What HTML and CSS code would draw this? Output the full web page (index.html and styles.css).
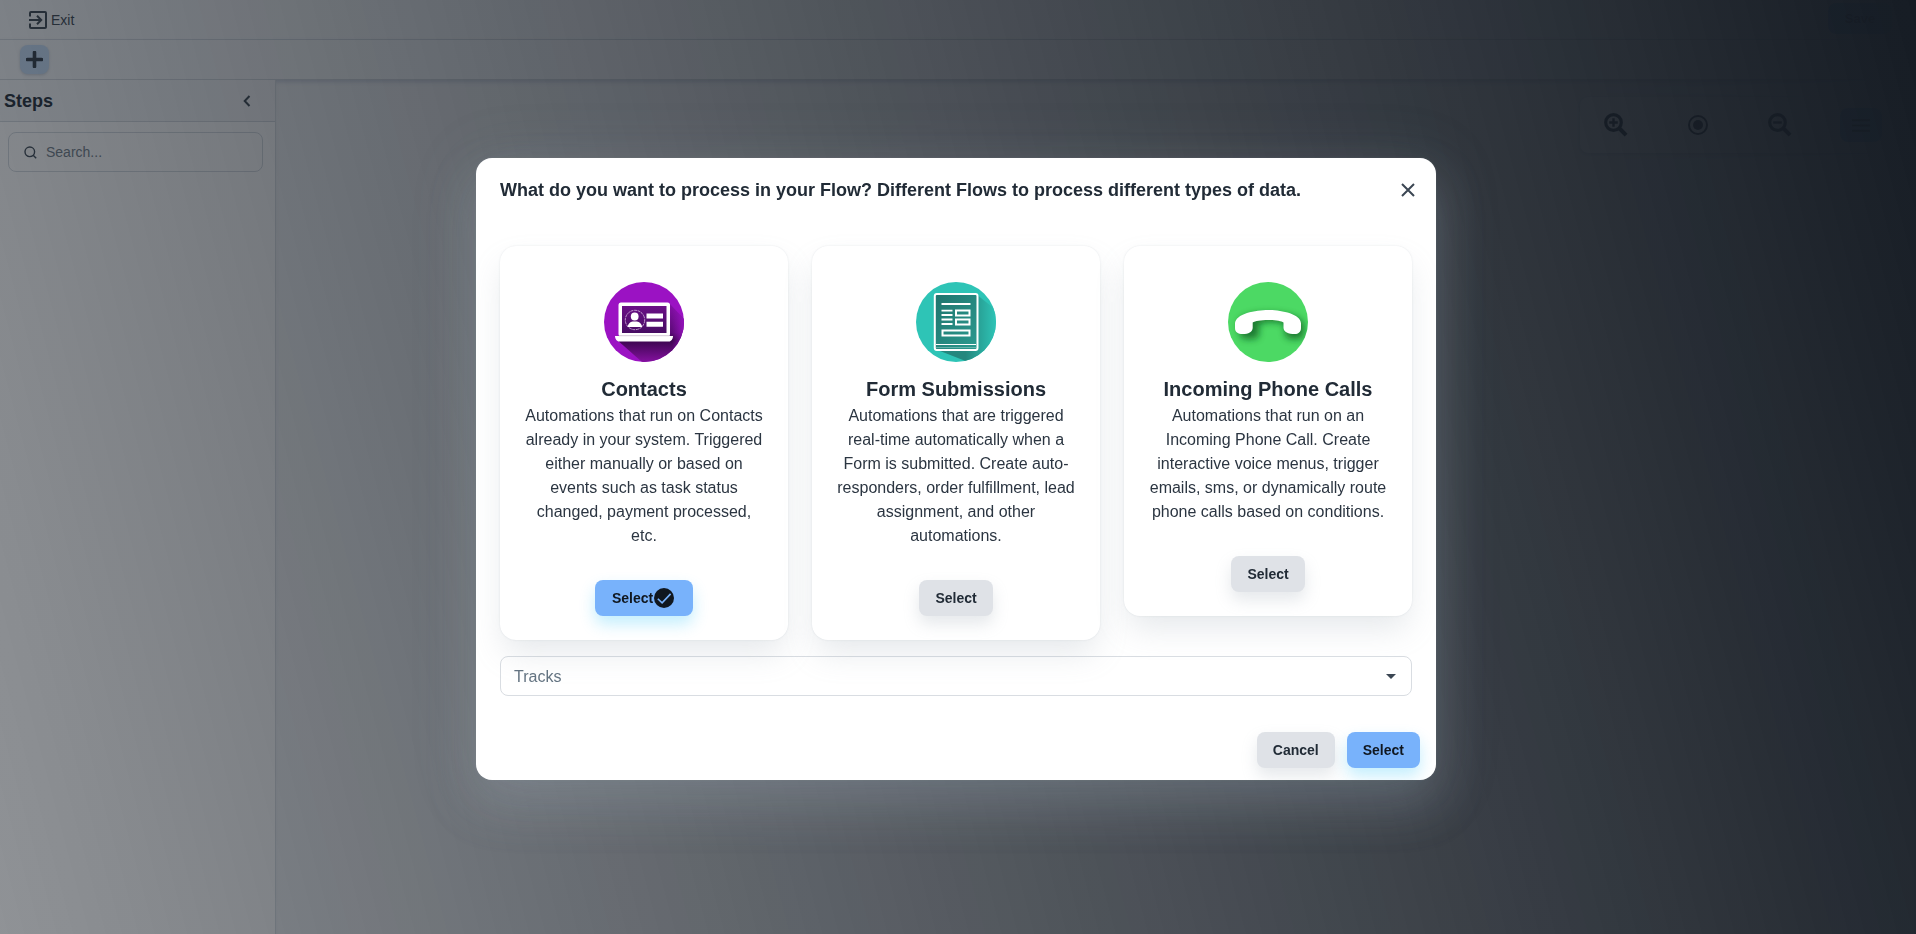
FILE: index.html
```html
<!DOCTYPE html>
<html lang="en">
<head>
<meta charset="utf-8">
<title>Flow builder</title>
<link rel="stylesheet" href="styles.css">
</head>
<body>
<div class="app">
  <header class="topbar">
    <svg class="exit-icon" viewBox="0 0 18 18"><path d="M1 5.5V2a1 1 0 0 1 1-1h14a1 1 0 0 1 1 1v14a1 1 0 0 1-1 1H2a1 1 0 0 1-1-1v-3.5M0 9h12M8 4.8L12.2 9 8 13.2" fill="none" stroke="currentColor" stroke-width="2"/></svg>
    <span>Exit</span>
    <button class="save">Save</button>
  </header>
  <div class="toolbar">
    <button class="add"><svg viewBox="0 0 17 17"><path d="M8.5 1.5v14M1.5 8.5h14" stroke="currentColor" stroke-width="3.6" stroke-linecap="round"/></svg></button>
  </div>
  <div class="workspace">
    <aside class="sidebar">
      <div class="steps"><h2>Steps</h2><svg class="chevron" viewBox="0 0 8 12"><path d="M6.5 1L1.7 6l4.8 5" fill="none" stroke="currentColor" stroke-width="2"/></svg></div>
      <div class="search"><svg viewBox="0 0 13 13"><circle cx="5.8" cy="5.8" r="4.8" fill="none" stroke="currentColor" stroke-width="1.4"/><path d="M9.2 9.2l3 3" stroke="currentColor" stroke-width="1.4"/></svg><span>Search...</span></div>
    </aside>
    <main class="canvas">
      <div class="zoombar">
        <svg class="zi" viewBox="0 0 24 24"><circle cx="9.5" cy="9.5" r="7.8" fill="none" stroke="currentColor" stroke-width="3.2"/><path d="M15.5 15.5l6.6 6.6" stroke="currentColor" stroke-width="4"/><path d="M9.5 5.2v8.6M5.2 9.5h8.6" stroke="currentColor" stroke-width="2.4"/></svg>
        <svg class="zi" viewBox="0 0 24 24"><circle cx="12" cy="12" r="9" fill="none" stroke="currentColor" stroke-width="2"/><circle cx="12" cy="12" r="5" fill="currentColor"/></svg>
        <svg class="zi" viewBox="0 0 24 24"><circle cx="9.5" cy="9.5" r="7.8" fill="none" stroke="currentColor" stroke-width="3.2"/><path d="M15.5 15.5l6.6 6.6" stroke="currentColor" stroke-width="4"/><path d="M5.2 9.5h8.6" stroke="currentColor" stroke-width="2.4"/></svg>
        <button class="menu"><svg viewBox="0 0 18 13"><path d="M0 1.2h18M0 6.5h18M0 11.8h18" stroke="currentColor" stroke-width="2"/></svg></button>
      </div>
    </main>
  </div>
</div>
<div class="backdrop">
  <section class="dialog">
    <div class="dialog-head"><h1>What do you want to process in your Flow? Different Flows to process different types of data.</h1>
      <svg class="close" viewBox="0 0 14 14"><path d="M1 1l12 12M13 1L1 13" stroke="currentColor" stroke-width="2"/></svg></div>
    <div class="cards">
      <article class="card">
        <svg class="pic" viewBox="0 0 80 80">
          <defs><clipPath id="c"><circle cx="40" cy="40" r="40"/></clipPath><linearGradient id="p" x1="0" y1="0" x2="0" y2="1"><stop offset="0" stop-color="#8610a9"/><stop offset="0.5" stop-color="#5c0b78"/><stop offset="0.62" stop-color="#38054b"/><stop offset="1" stop-color="#84119f"/></linearGradient><linearGradient id="pf" x1="0" y1="0" x2="1" y2="0"><stop offset="0.82" stop-color="#9b12c3" stop-opacity="0"/><stop offset="1" stop-color="#9b12c3" stop-opacity=".85"/></linearGradient><linearGradient id="ps" x1="0" y1="0" x2="0" y2="1"><stop offset="0" stop-color="#6a1086"/><stop offset="1" stop-color="#470c63"/></linearGradient></defs>
          <g clip-path="url(#c)"><rect width="80" height="80" fill="#9b12c3"/><path d="M12 57L38 80h42V37L65 21z" fill="url(#p)"/><path d="M12 57L38 80h42V37L65 21z" fill="url(#pf)"/></g>
          <rect x="14.500" y="20.500" width="51.500" height="34" rx="2.500" fill="#fff"/><rect x="18" y="24" width="44.500" height="27" fill="url(#ps)"/>
          <path d="M11 54h58c0 3-2 5.500-4 5.500H15c-2 0-4-2.500-4-5.500z" fill="#fff"/><path d="M15 53.700h50" stroke="#c9bdcd" stroke-width=".8"/>
          <circle cx="31" cy="38" r="9.700" fill="none" stroke="#c9a6d6" stroke-width=".9" stroke-dasharray="3 .7"/>
          <circle cx="30.700" cy="34.500" r="3.900" fill="#fff"/><path d="M23.500 45c1-4.500 4-5.500 5.800-5.500h2.800c2 0 5 1 6.200 5.500z" fill="#fff"/>
          <path d="M42.500 31.500h16.500v5H42.500zM42.500 39.800h16.500v5H42.500z" fill="#fff"/>
        </svg>
        <h3>Contacts</h3>
        <p>Automations that run on Contacts already in your system. Triggered either manually or based on events such as task status changed, payment processed, etc.</p>
        <button class="btn primary chosen">Select<svg class="check" viewBox="0 0 20 20"><circle cx="10" cy="10" r="10" fill="currentColor"/><path d="M3.800 10.700l4.300 4.200 8.500-9" fill="none" stroke="#78b2fb" stroke-width="1.600"/></svg></button>
      </article>
      <article class="card">
        <svg class="pic" viewBox="0 0 80 80">
          <defs><linearGradient id="t" x1="0" y1="0" x2="1" y2="0"><stop offset="0.5" stop-color="#24877e"/><stop offset="1" stop-color="#2ec4b6"/></linearGradient><linearGradient id="tp" x1="0" y1="0" x2="1" y2="1"><stop offset="0" stop-color="#1f746d"/><stop offset="1" stop-color="#2c9a90"/></linearGradient></defs>
          <g clip-path="url(#c)"><rect width="80" height="80" fill="#2ec4b6"/><path d="M19 67L52 80h28V28L60 12z" fill="url(#t)"/></g>
          <rect x="18.800" y="12" width="42.700" height="56" rx="2" fill="url(#tp)" stroke="#fff" stroke-width="2"/>
          <path d="M20 62.500h40" stroke="#fff" stroke-width="1.200"/><path d="M20 65.500h40" stroke="#8ec9c3" stroke-width=".6"/>
          <path d="M25.500 22h29M25.500 28.700h11M25.500 33h11M25.500 37.500h11M25.500 42h11" stroke="#fff" stroke-width="1.800"/>
          <path d="M40 28.500h13.500v5H40zM40 37.500h13.500v5H40zM26.500 48.500h27v5h-27z" fill="none" stroke="#fff" stroke-width="2"/>
        </svg>
        <h3>Form Submissions</h3>
        <p>Automations that are triggered real-time automatically when a Form is submitted. Create auto-responders, order fulfillment, lead assignment, and other automations.</p>
        <button class="btn">Select</button>
      </article>
      <article class="card">
        <svg class="pic" viewBox="0 0 80 80">
          <defs><filter id="b" x="-20%" y="-30%" width="140%" height="180%"><feGaussianBlur stdDeviation="3.500"/></filter></defs>
          <g clip-path="url(#c)"><rect width="80" height="80" fill="#4cd964"/><path d="M10 44C10 32 30 31 42 31s34 3 34 13v7c0 5-3 6-7 6h-5c-5 0-7-3-7-7v-8c-8-3-18-3-26 0v9c0 4-3 6-6 6h-6c-5 0-7-2-7-6z" fill="#115c20" opacity=".75" filter="url(#b)"/></g>
          <path d="M7 42C7 31.500 28 28 40 28s33 3.500 33 13.500V46c0 4-3 6-6 6-7 0-11-2-11.500-6v-5.500C53.500 39 47 38 40 38s-13 1-15.300 2.500V46c-.5 4-4 6-10 6C10 52 7 50 7 46z" fill="#fff"/>
        </svg>
        <h3>Incoming Phone Calls</h3>
        <p>Automations that run on an Incoming Phone Call. Create interactive voice menus, trigger emails, sms, or dynamically route phone calls based on conditions.</p>
        <button class="btn">Select</button>
      </article>
    </div>
    <div class="tracks"><span>Tracks</span><svg viewBox="0 0 10 5"><path d="M0 0h10L5 5z" fill="currentColor"/></svg></div>
    <div class="actions"><button class="btn cancel">Cancel</button><button class="btn primary last">Select</button></div>
  </section>
</div>
</body>
</html>
```
FILE: styles.css
```css
* { box-sizing: border-box; margin: 0; }
body { font-family: "Liberation Sans", Arial, sans-serif; color: #212b36; font-size: 16px; line-height: 24px; }
button { font: inherit; color: inherit; border: 0; padding: 0; }
svg { display: block; flex: none; }
.app { height: 934px; display: flex; flex-direction: column; background: #fff; overflow: hidden; }
.topbar { height: 40px; display: flex; align-items: center; gap: 4px; padding-left: 29px; padding-right: 24px; font-size: 14px; color: #3a4550; background: #f4f6f8; border-bottom: 1px solid #d5dae0; }
.exit-icon { width: 18px; height: 18px; }
.save { margin: -2px 0 0 auto; width: 64px; height: 31px; border-radius: 8px; background: #78b2fb; font-weight: 700; font-size: 13px; color: #212b36; }
.toolbar { height: 40px; display: flex; align-items: center; padding-left: 20px; background: #f4f6f8; border-bottom: 1px solid #d0d5db; box-shadow: 0 2px 4px rgba(110,120,150,.3); }
.add { width: 29px; height: 29px; border-radius: 8px; background: #c4dcf6; display: grid; place-items: center; box-shadow: 0 1px 3px rgba(90,110,140,.3); color: #303b47; }
.add svg { width: 17px; height: 17px; }
.workspace { flex: 1; display: flex; }
.sidebar { width: 276px; background: #fff; border-right: 1px solid #d8dde2; }
.steps { height: 42px; display: flex; align-items: center; justify-content: space-between; padding: 0 25px 0 4px; background: #f4f6f8; border-bottom: 1px solid #d3d8de; }
.steps h2 { font-size: 18px; line-height: 28px; }
.chevron { width: 8px; height: 12px; margin-right: -1px; color: #3a4550; }
.search { margin: 10px 12px 0 8px; height: 40px; border: 1px solid #d3d9df; border-radius: 8px; display: flex; align-items: center; padding-left: 15px; gap: 9px; font-size: 14px; color: #6f7c88; }
.search svg { width: 13px; height: 13px; color: #3c4854; }
.canvas { flex: 1; background: #f0f2f4; box-shadow: inset 0 4px 4px -2px rgba(110,120,160,.3); display: flex; justify-content: flex-end; align-items: flex-start; padding: 17px 16px 0 0; }
.zoombar { width: 320px; height: 56px; border-radius: 8px; background: #f6f7f9; box-shadow: 0 1px 4px rgba(100,110,130,.3); display: flex; align-items: center; gap: 58px; padding: 0 17px 0 24px; }
.zi { width: 24px; height: 24px; }
.menu { width: 42px; height: 34px; margin-left: -10px; border-radius: 8px; background: #78b2fb; display: grid; place-items: center; }
.menu svg { width: 18px; height: 13px; }
.backdrop { position: fixed; inset: 0; background: linear-gradient(75deg, rgba(22,28,36,.48) 0%, #161c24 100%); display: flex; justify-content: center; align-items: flex-start; padding: 158px 4px 0 0; }
.dialog { width: 960px; height: 622px; border-radius: 16px; background: #fff; overflow: hidden; box-shadow: 0 0 2px 0 rgba(145,158,171,.24), 0 24px 48px 0 rgba(145,158,171,.3), 0 9px 60px 12px rgba(145,158,171,.1); }
.dialog-head { height: 88px; padding: 18px 21px 0 24px; display: flex; justify-content: space-between; }
.dialog-head h1 { font-size: 18px; line-height: 28px; white-space: nowrap; }
.close { width: 14px; height: 14px; margin-top: 7px; color: #3b4653; }
.cards { display: flex; align-items: flex-start; gap: 24px; padding: 0 24px; height: 410px; }
.card { width: 288px; border-radius: 16px; background: #fff; padding: 36px 24px 24px; display: flex; flex-direction: column; align-items: center; text-align: center; box-shadow: 0 0 2px 0 rgba(145,158,171,.24), 0 16px 32px -4px rgba(145,158,171,.24); }
.pic { width: 80px; height: 80px; margin-bottom: 12px; }
.card h3 { font-size: 20px; line-height: 30px; white-space: nowrap; }
.card p { font-size: 16px; line-height: 24px; color: #2b3541; margin-bottom: 32px; }
.btn { height: 36px; border-radius: 8px; padding: 0 16px; background: #dfe2e7; font-size: 14px; font-weight: 700; display: flex; align-items: center; gap: 1px; box-shadow: 0 8px 16px rgba(145,158,171,.24); }
.primary { background: #78b2fb; color: #10171f; box-shadow: 0 8px 16px rgba(0,184,245,.24); }
.chosen { width: 98px; padding: 0 0 0 17px; }
.check { width: 20px; height: 20px; }
.tracks { margin: 0 24px; height: 40px; border: 1px solid #d9dde2; border-radius: 8px; display: flex; align-items: center; justify-content: space-between; padding: 1px 15px 0 13px; color: #637381; }
.tracks svg { width: 10px; height: 5px; color: #3b4653; }
.actions { display: flex; justify-content: flex-end; gap: 12px; padding: 36px 16px 0; }
```
